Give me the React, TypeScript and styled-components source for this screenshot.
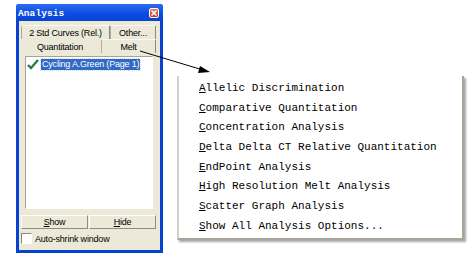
import styled, { createGlobalStyle } from "styled-components";

const Global = createGlobalStyle`
  html, body {
    margin: 0;
    padding: 0;
    background: #fff;
  }
  #root {
    width: 471px;
    height: 261px;
  }
`;

const Stage = styled.div`
  position: relative;
  display: flex;
  align-items: flex-start;
  width: 471px;
  height: 261px;
  background: #fff;
  overflow: hidden;
`;

const Window = styled.div`
  margin: 4px 0 0 16px;
  width: 147px;
  height: 249px;
  box-sizing: border-box;
  display: flex;
  flex-direction: column;
  background: #0842d0;
  border-radius: 3px 3px 0 0;
  padding: 0 3px 3px 3px;
`;

const TitleBar = styled.div`
  height: 16px;
  display: flex;
  align-items: center;
  justify-content: space-between;
  background: linear-gradient(#2a6cf0, #0a4be0 60%, #0844d4);
  margin: 0 -3px;
  padding: 1px 4px 0 2px;
  border-radius: 3px 3px 0 0;
`;

const Title = styled.span`
  font-family: "Liberation Mono", monospace;
  font-weight: bold;
  font-size: 9.5px;
  color: #fff;
  letter-spacing: 0.1px;
`;

const CloseBtn = styled.div`
  width: 10px;
  height: 10px;
  box-sizing: border-box;
  border: 1px solid #fff;
  border-radius: 2px;
  background: linear-gradient(#e87a5a, #c9401d);
  display: flex;
  align-items: center;
  justify-content: center;
`;

const Body = styled.div`
  flex: 1;
  background: #ece9d8;
  display: flex;
  flex-direction: column;
  padding: 4px 3px 0 0;
  font-family: "Liberation Sans", Arial, sans-serif;
  font-size: 9px;
  letter-spacing: -0.2px;
  color: #000;
`;

const TabRow = styled.div<{ $indent: number }>`
  display: flex;
  height: 14px;
  padding-left: ${(p) => p.$indent}px;
`;

const Tab = styled.div<{ $w: number; $active?: boolean }>`
  width: ${(p) => p.$w}px;
  box-sizing: border-box;
  display: flex;
  align-items: center;
  justify-content: center;
  white-space: nowrap;
  background: #ece9d8;
  border: 1px solid ${(p) => (p.$active ? "transparent" : "#fbfaf5")};
  border-left-color: ${(p) => (p.$active ? "transparent" : "#b0ad9f")};
  border-right-color: ${(p) => (p.$active ? "transparent" : "#8d8a7c")};
  border-bottom: none;
  border-radius: 2px 2px 0 0;
`;

const Panel = styled.div`
  flex: 1;
  display: flex;
  flex-direction: column;
  padding: 3px 4px 0 6px;
`;

const List = styled.div`
  height: 153px;
  background: #fff;
  border: 1px solid;
  border-color: #a5a29a #fff #fff #a5a29a;
  box-sizing: border-box;
  padding: 2px 0 0 1px;
`;

const ListItem = styled.div`
  display: flex;
  align-items: center;
  gap: 2px;
`;

const Selected = styled.span`
  background: #316ac5;
  color: #fff;
  padding: 0 1px;
  line-height: 11px;
  white-space: nowrap;
  outline: 1px dotted #c8d8f0;
`;

const ButtonRow = styled.div`
  display: flex;
  margin: 6px -3px 0 -4px;
  gap: 1px;
`;

const Button = styled.div`
  flex: 1;
  height: 14px;
  box-sizing: border-box;
  display: flex;
  align-items: center;
  justify-content: center;
  background: #ece9d8;
  border: 1px solid #fff;
  border-right-color: #8e8c80;
  border-bottom-color: #8e8c80;
`;

const CheckRow = styled.div`
  display: flex;
  align-items: center;
  gap: 3px;
  margin: 4px 0 0 -4px;
`;

const Box = styled.div`
  width: 11px;
  height: 11px;
  box-sizing: border-box;
  background: #fff;
  border: 1px solid;
  border-color: #8a8778 #fff #fff #8a8778;
`;

const Menu = styled.div`
  margin: 76px 0 0 14px;
  width: 287px;
  box-sizing: border-box;
  background: #fff;
  border-left: 2px solid #d4d0c8;
  border-right: 2px solid #a9a59b;
  border-bottom: 2px solid #a9a59b;
  box-shadow: 2px 2px 2px rgba(0, 0, 0, 0.35);
  padding: 3px 0 1px 20px;
  font-family: "Liberation Mono", monospace;
  font-size: 11px;
  color: #000;
`;

const MenuItem = styled.div`
  height: 19.7px;
  line-height: 19.7px;
  white-space: nowrap;
`;

const Arrow = styled.svg`
  position: absolute;
  left: 0;
  top: 0;
  pointer-events: none;
`;

const items: [string, string][] = [
  ["A", "llelic Discrimination"],
  ["C", "omparative Quantitation"],
  ["C", "oncentration Analysis"],
  ["D", "elta Delta CT Relative Quantitation"],
  ["E", "ndPoint Analysis"],
  ["H", "igh Resolution Melt Analysis"],
  ["S", "catter Graph Analysis"],
  ["S", "how All Analysis Options..."],
];

export default function App() {
  return (
    <Stage>
      <Global />
      <Window>
        <TitleBar>
          <Title>Analysis</Title>
          <CloseBtn>
            <svg width="6" height="6" viewBox="0 0 6 6">
              <path d="M0.5 0.5L5.5 5.5M5.5 0.5L0.5 5.5" stroke="#fff" strokeWidth="1.5" />
            </svg>
          </CloseBtn>
        </TitleBar>
        <Body>
          <TabRow $indent={2}>
            <Tab $w={89}>2 Std Curves (Rel.)</Tab>
            <Tab $w={46}>Other...</Tab>
          </TabRow>
          <TabRow $indent={0}>
            <Tab $w={82} $active>
              Quantitation
            </Tab>
            <Tab $w={55}>Melt</Tab>
          </TabRow>
          <Panel>
            <List>
              <ListItem>
                <svg width="12" height="11" viewBox="0 0 12 11">
                  <path
                    d="M1 6L4 9L11 1"
                    fill="none"
                    stroke="#2a7d48"
                    strokeWidth="2.4"
                  />
                </svg>
                <Selected>Cycling A.Green (Page 1)</Selected>
              </ListItem>
            </List>
            <ButtonRow>
              <Button>
                <span>
                  <u>S</u>how
                </span>
              </Button>
              <Button>
                <span>
                  <u>H</u>ide
                </span>
              </Button>
            </ButtonRow>
            <CheckRow>
              <Box />
              <span>Auto-shrink window</span>
            </CheckRow>
          </Panel>
        </Body>
      </Window>
      <Menu>
        {items.map(([k, rest], i) => (
          <MenuItem key={i}>
            <u>{k}</u>
            {rest}
          </MenuItem>
        ))}
      </Menu>
      <Arrow width="471" height="261">
        <line x1="140" y1="51" x2="203" y2="70" stroke="#000" strokeWidth="1" />
        <polygon points="210,72 200,66 198,73" fill="#000" />
      </Arrow>
    </Stage>
  );
}
